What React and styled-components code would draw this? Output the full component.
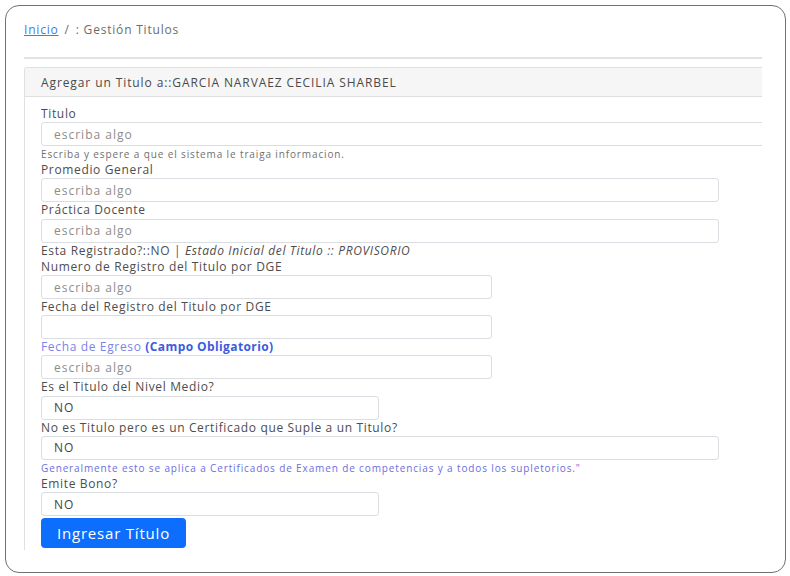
import React from "react";
import styled, { createGlobalStyle } from "styled-components";

const GlobalStyle = createGlobalStyle`
  html, body {
    margin: 0;
    padding: 0;
    background: #ffffff;
  }
  body {
    font-family: "Open Sans", "Liberation Sans", sans-serif;
    color: #4d4d4d;
  }
`;

const Frame = styled.div`
  box-sizing: border-box;
  margin: 5px;
  width: 781px;
  height: 568px;
  border: 1px solid #707070;
  border-radius: 14px;
  padding: 0 23px 0 18px;
`;

const Content = styled.div`
  height: 544px;
  overflow: hidden;
`;

const Breadcrumb = styled.nav`
  padding-top: 16px;
  font-size: 12px;
  line-height: 16px;
  letter-spacing: 0.8px;
  color: #6c6c6c;
  display: flex;
  gap: 6px;
`;

const Crumb = styled.a`
  color: #3d7bf0;
  text-decoration: underline;
`;

const Divider = styled.hr`
  margin: 19px 0 8px;
  border: 0;
  border-top: 2px solid #e2e2e2;
`;

const Card = styled.section`
  width: 800px;
  border: 1px solid #e0e0e0;
  border-right: 0;
  border-radius: 3px 0 0 3px;
`;

const CardHeader = styled.header`
  height: 28px;
  padding-left: 16px;
  display: flex;
  align-items: center;
  background: #f6f6f6;
  border-bottom: 1px solid #e0e0e0;
  font-size: 12px;
  letter-spacing: 0.9px;
  color: #4a4a4a;
`;

const CardBody = styled.div`
  padding: 9px 16px 40px;
`;

const Label = styled.div`
  font-size: 12px;
  line-height: 16.2px;
  letter-spacing: 0.65px;
  color: ${(p) => p.$color || "#4d4d4d"};
`;

const Strong = styled.b`
  color: #3b5ce0;
  font-weight: 700;
  letter-spacing: 0.4px;
`;

const Italic = styled.i``;

const Help = styled.div`
  font-size: 10px;
  line-height: 16px;
  letter-spacing: 0.87px;
  color: ${(p) => p.$color || "#707070"};
`;

const Input = styled.div`
  box-sizing: border-box;
  width: ${(p) => p.$width};
  height: 24px;
  padding-left: 12px;
  display: flex;
  align-items: center;
  border: 1px solid #dadde2;
  border-radius: 3px;
  font-size: 12px;
  letter-spacing: 1px;
  color: ${(p) => (p.$value ? "#444" : "#8d8d8d")};
`;

const Button = styled.button`
  display: block;
  margin-top: 2px;
  width: 145px;
  height: 30px;
  border: 0;
  border-radius: 4px;
  background: #0d6efd;
  color: #fff;
  font-family: "Open Sans", "Liberation Sans", sans-serif;
  font-size: 15px;
  font-weight: 500;
  letter-spacing: 0.8px;
  cursor: pointer;
`;

const FULL = "760px";
const WIDE = "678px";
const MID = "451px";
const HALF = "338px";

const Field = ({ label, width, value, empty }) => (
  <>
    {label}
    <Input $width={width} $value={!!value}>
      {empty ? "" : value || "escriba algo"}
    </Input>
  </>
);

export default function App() {
  return (
    <>
      <GlobalStyle />
      <Frame>
        <Content>
          <Breadcrumb>
            <Crumb href="#">Inicio</Crumb>
            <span>/</span>
            <span>: Gestión Titulos</span>
          </Breadcrumb>
          <Divider />
          <Card>
            <CardHeader>Agregar un Titulo a::GARCIA NARVAEZ CECILIA SHARBEL</CardHeader>
            <CardBody>
              <Field label={<Label>Titulo</Label>} width={FULL} />
              <Help>Escriba y espere a que el sistema le traiga informacion.</Help>
              <Field label={<Label>Promedio General</Label>} width={WIDE} />
              <Field label={<Label>Práctica Docente</Label>} width={WIDE} />
              <Label>
                Esta Registrado?::NO | <Italic>Estado Inicial del Titulo :: PROVISORIO</Italic>
              </Label>
              <Field label={<Label>Numero de Registro del Titulo por DGE</Label>} width={MID} />
              <Field label={<Label>Fecha del Registro del Titulo por DGE</Label>} width={MID} empty />
              <Field
                label={
                  <Label $color="#7b83ec">
                    Fecha de Egreso <Strong>(Campo Obligatorio)</Strong>
                  </Label>
                }
                width={MID}
              />
              <Field label={<Label>Es el Titulo del Nivel Medio?</Label>} width={HALF} value="NO" />
              <Field
                label={<Label>No es Titulo pero es un Certificado que Suple a un Titulo?</Label>}
                width={WIDE}
                value="NO"
              />
              <Help $color="#6b6ee0">
                Generalmente esto se aplica a Certificados de Examen de competencias y a todos los supletorios."
              </Help>
              <Field label={<Label>Emite Bono?</Label>} width={HALF} value="NO" />
              <Button type="button">Ingresar Título</Button>
            </CardBody>
          </Card>
        </Content>
      </Frame>
    </>
  );
}
